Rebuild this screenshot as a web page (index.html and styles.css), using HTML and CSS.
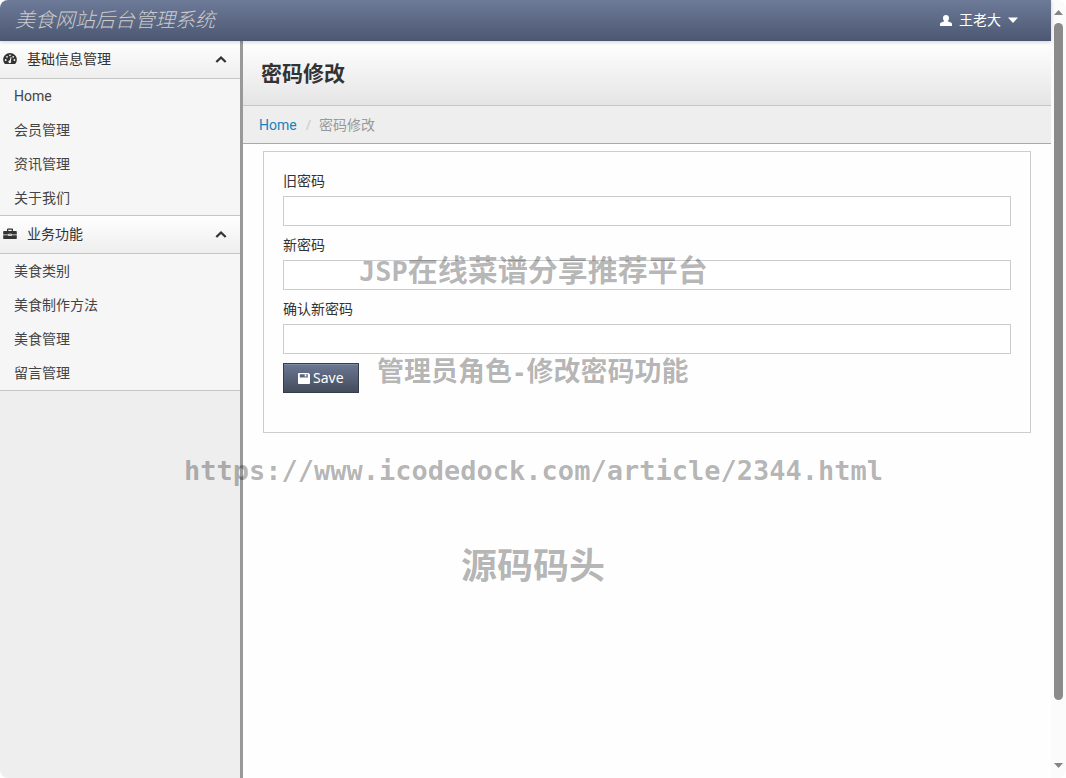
FILE: index.html
```html
<!DOCTYPE html>
<html lang="zh-CN">
<head>
<meta charset="utf-8">
<title>美食网站后台管理系统</title>
<link rel="stylesheet" href="styles.css">
</head>
<body>
<div class="window">
  <div class="app">
    <header class="topbar">
      <a class="brand" href="#">美食网站后台管理系统</a>
      <button class="user" type="button">
        <svg width="12" height="11" viewBox="0 0 12 11" fill="currentColor"><path d="M6 0C4.100 0 3 1.300 3 3c0 1.300.5 2.500 1.300 3.200L1.200 7.500C.3 7.900 0 8.500 0 9.300V11h12V9.300c0-.8-.3-1.400-1.200-1.800L7.700 6.200C8.500 5.500 9 4.300 9 3c0-1.700-1.100-3-3-3z"/></svg>
        <span>王老大</span>
        <svg class="caret" width="10" height="6" viewBox="0 0 10 6" fill="currentColor"><path d="M0 .5h10L5 6z"/></svg>
      </button>
    </header>
    <div class="body">
      <nav class="sidebar">
        <button class="group" type="button">
          <svg width="14" height="14" viewBox="0 0 14 14"><path fill="#333" d="M7 1C3.100 1 .2 4 .2 7.600c0 1.700.6 3.300 1.700 4.400h10.200c1.100-1.100 1.700-2.700 1.700-4.400C13.800 4 10.900 1 7 1z"/><g fill="#f5f5f5"><circle cx="2.700" cy="8" r=".9"/><circle cx="4" cy="4.800" r=".9"/><circle cx="7" cy="3.300" r=".9"/><circle cx="10.200" cy="4.800" r=".9"/><circle cx="11.400" cy="8" r=".9"/><circle cx="6.800" cy="9.800" r="1.400"/><path d="M6.300 9.500 7.800 5l.8.2-1 4.700z"/></g></svg>
          <span>基础信息管理</span>
          <svg class="chevron" width="12" height="8" viewBox="0 0 12 8"><path d="M1.300 7 6 2.500 10.700 7" fill="none" stroke="#333" stroke-width="2.300"/></svg>
        </button>
        <ul class="menu">
          <li><a href="#" class="latin">Home</a></li>
          <li><a href="#">会员管理</a></li>
          <li><a href="#">资讯管理</a></li>
          <li><a href="#">关于我们</a></li>
        </ul>
        <button class="group" type="button">
          <svg width="14" height="14" viewBox="0 0 14 14"><g fill="#333"><path d="M4 4V2.500C4 2 4.400 1.600 5 1.600h4c.6 0 1 .4 1 .9V4h2.800c.6 0 1 .4 1 1v2.400H8.600v-.7H5.400v.7H.2V5c0-.6.400-1 1-1zM5.300 4h3.400V2.800H5.300z"/><path d="M.2 8.200h5.200V9h3.200v-.8h5.200v3c0 .500-.400.900-1 .9H1.200c-.600 0-1-.4-1-.9zM6.300 7.400h1.400v.9H6.300z"/></g></svg>
          <span>业务功能</span>
          <svg class="chevron" width="12" height="8" viewBox="0 0 12 8"><path d="M1.300 7 6 2.500 10.700 7" fill="none" stroke="#333" stroke-width="2.300"/></svg>
        </button>
        <ul class="menu">
          <li><a href="#">美食类别</a></li>
          <li><a href="#">美食制作方法</a></li>
          <li><a href="#">美食管理</a></li>
          <li><a href="#">留言管理</a></li>
        </ul>
      </nav>
      <main class="content">
        <h1 class="title">密码修改</h1>
        <div class="crumbs"><a class="latin" href="#">Home</a><span class="sep">/</span><span>密码修改</span></div>
        <form class="panel">
          <label for="old">旧密码</label>
          <input id="old" type="password">
          <label for="new">新密码</label>
          <input id="new" type="password">
          <label for="confirm">确认新密码</label>
          <input id="confirm" type="password">
          <button class="save" type="button">
            <svg width="12" height="11" viewBox="0 0 12 11"><path fill="#fff" fill-rule="evenodd" d="M1 0h9.500L12 1.200V10c0 .6-.4 1-1 1H1c-.6 0-1-.4-1-1V1c0-.6.4-1 1-1zm.8 1.200v3.300h8V1.200zM6.700 1.600h1.700v2H6.700z"/></svg>
            <span>Save</span>
          </button>
        </form>
      </main>
    </div>
  </div>
  <div class="scrollbar" aria-hidden="true">
    <svg width="9" height="5" viewBox="0 0 9 5"><path fill="#858585" d="M4.500 0 9 5H0z"/></svg>
    <div class="thumb"></div>
    <svg width="9" height="5" viewBox="0 0 9 5"><path fill="#858585" d="M4.500 5 9 0H0z"/></svg>
  </div>
  <div class="mark mark-title"><span class="mono">JSP</span>在线菜谱分享推荐平台</div>
  <div class="mark mark-role">管理员角色<span class="mono">-</span>修改密码功能</div>
  <div class="mark mark-url">https://www.icodedock.com/article/2344.html</div>
  <div class="mark mark-name">源码码头</div>
</div>
</body>
</html>
```
FILE: styles.css
```css
* { box-sizing: border-box; }
html { background: #fff; }
body {
  margin: 0;
  color: #333;
  font: 14px/20px "Noto Sans", "Noto Sans CJK SC", sans-serif;
}
a { color: inherit; text-decoration: none; }
button { font: inherit; border: 0; cursor: pointer; }
svg { flex: none; }
.latin { font-family: Roboto, sans-serif; }

.window {
  position: relative;
  display: flex;
  min-height: 100vh;
  overflow: hidden;
  border-radius: 8px;
  background: #fefefe;
}
.app { flex: 1; display: flex; flex-direction: column; }

.topbar {
  position: relative;
  display: flex;
  align-items: center;
  justify-content: space-between;
  height: 41px;
  padding: 0 33px 0 15px;
  background: linear-gradient(#6d7a98, #4d5973);
  border-bottom: 1px solid #4a566f;
  box-shadow: 0 1px 4px rgba(0, 0, 0, .2);
}
.brand { color: #ccc; font-size: 20px; font-style: italic; font-weight: 300; }
.user {
  display: flex;
  align-items: center;
  gap: 7px;
  padding: 0;
  background: none;
  color: #fff;
}

.body { flex: 1; display: flex; }
.sidebar {
  flex: none;
  width: 243px;
  background: #eee;
  border-right: 3px solid #999;
}
.group {
  display: flex;
  align-items: center;
  gap: 10px;
  width: 100%;
  height: 38px;
  padding: 0 13px 2px 3px;
  color: #333;
  background: linear-gradient(#fff, #eee);
  border-bottom: 1px solid #c6c6c6;
}
.chevron { margin-left: auto; }
.menu {
  margin: 0;
  padding: 0;
  list-style: none;
  background: #f6f6f6;
  border-bottom: 1px solid #c6c6c6;
}
.menu a { display: block; padding: 7px 14px; color: #444; }

.content { flex: 1; min-width: 0; }
.title {
  margin: 0;
  padding: 17px 18px;
  font-size: 21px;
  line-height: 30px;
  background: linear-gradient(#fff, #e5e5e5);
  border-bottom: 1px solid #c6c6c6;
}
.crumbs {
  display: flex;
  padding: 9px 16px 8px;
  color: #999;
  background: #eee;
  border-bottom: 1px solid #aaa;
}
.crumbs a { color: #1a82b8; }
.sep { padding: 0 8px 0 9px; color: #ccc; }
.panel {
  display: flex;
  flex-direction: column;
  margin: 7px 20px 20px;
  padding: 19px 19px 39px;
  border: 1px solid #ccc;
}
.panel label { margin-bottom: 5px; }
.panel input {
  width: 100%;
  height: 30px;
  margin-bottom: 9px;
  padding: 4px 6px;
  border: 1px solid #ccc;
  background: #fff;
}
.save {
  display: flex;
  align-items: center;
  align-self: flex-start;
  gap: 3px;
  height: 30px;
  padding: 0 14px;
  color: #fff;
  border: 1px solid #353d4b;
  background: linear-gradient(#6b7893, #444c5c);
  box-shadow: inset 0 1px 0 #7f8ba2;
}

.scrollbar {
  flex: none;
  display: flex;
  flex-direction: column;
  align-items: center;
  width: 15px;
  padding: 10px 0;
  background: #fbfbfb;
}
.thumb { width: 9px; height: 677px; margin: 8px 0 auto; border-radius: 5px; background: #8b8b8b; }

.mark {
  position: absolute;
  left: 0;
  color: rgba(0, 0, 0, .3);
  font-family: "Noto Sans CJK SC", sans-serif;
  font-weight: 700;
  line-height: 40px;
  white-space: nowrap;
  pointer-events: none;
}
.mark-title { top: 248px; left: 359px; font-size: 30px; }
.mark-title .mono { font-size: 27px; }
.mark-role { top: 350px; left: 377px; font-size: 27px; }
.mark-role .mono { font-size: 24px; }
.mark-url { top: 451px; left: 184px; font-size: 27px; }
.mark-name { top: 543px; left: 461px; font-size: 36px; }
.mono, .mark-url { font-family: "DejaVu Sans Mono", monospace; }
```
